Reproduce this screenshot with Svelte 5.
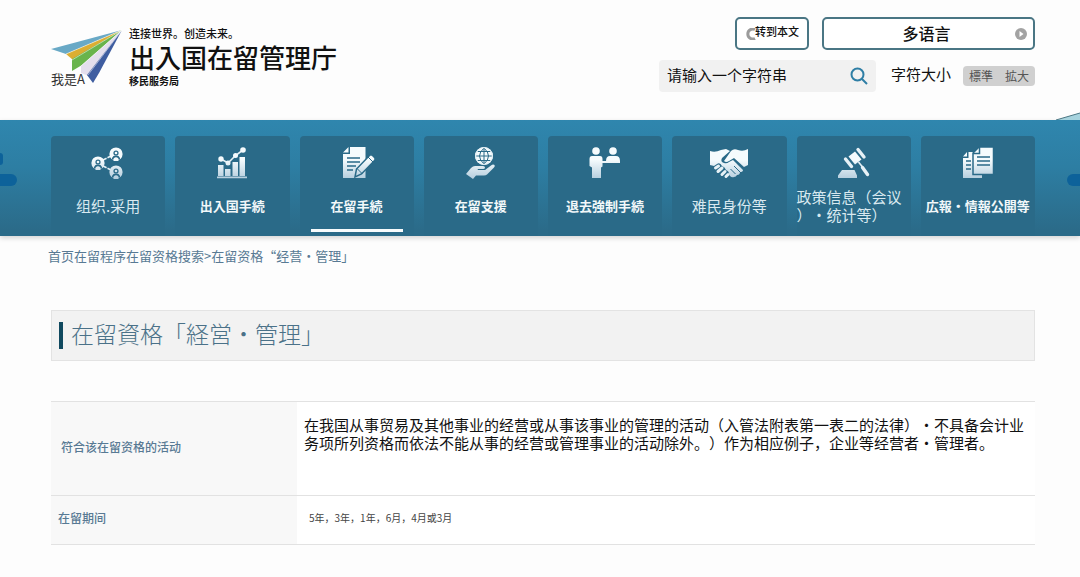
<script lang="ts">
    interface NavItem {
        icon: string;
        label: string;
        lang: "zh" | "ja";
        active?: boolean;
    }

    const navItems: NavItem[] = [
        { icon: "people", label: "组织.采用", lang: "zh" },
        { icon: "chart", label: "出入国手続", lang: "ja" },
        { icon: "form", label: "在留手続", lang: "ja", active: true },
        { icon: "globe", label: "在留支援", lang: "ja" },
        { icon: "counter", label: "退去強制手続", lang: "ja" },
        { icon: "handshake", label: "难民身份等", lang: "zh" },
        { icon: "gavel", label: "政策信息（会议）・统计等）", lang: "zh" },
        { icon: "papers", label: "広報・情報公開等", lang: "ja" },
    ];

    let query = $state("");
    let large = $state(false);
</script>

{#snippet person(x: number, y: number)}
    <circle cx={x} cy={y} r="6.6" />
    <circle class="cut" cx={x} cy={y - 1} r="2.6" />
    <path class="cut" d="M{x - 4} {y + 5.4}v-1.4q1-2.4 4-2.4t4 2.4v1.4z" />
    <circle cx={x} cy={y - 1} r="1.3" />
    <path d="M{x - 2.4} {y + 7}v-2.4q2.4-2.6 4.8 0v2.4z" />
{/snippet}

{#snippet icon(name: string)}
    <svg class="icon" viewBox="0 0 40 32" aria-hidden="true">
        {#if name === "people"}
            <path class="line" d="M15 13l8-4M15 19l8 4" stroke-dasharray="4 1" />
            {@render person(10, 16)}
            {@render person(28, 7)}
            {@render person(28, 25)}
        {:else if name === "chart"}
            <path d="M5 29.5h30v1.8H5zM6 18h5.5v11H6zM13 22h5.5v7H13zM20.5 15H26v14h-5.5zM27.5 10H33v19h-5.5z" />
            <path class="line" d="M9 12l7 4 7.5-7.5L31 3" />
            <circle cx="9" cy="12" r="2.7" />
            <circle cx="16" cy="16" r="2.5" />
            <circle cx="23.5" cy="8.5" r="2.5" />
            <circle cx="31" cy="3" r="2.8" />
        {:else if name === "form"}
            <path d="M13 0h15.500v31H6V7h7zM11.500 0v5.500H6z" />
            <path class="cut-line" d="M10 11h13M10 15h13M10 19h9M10 23h6" />
            <path class="edge" d="M18 30l1.500-8L32.500 8.500q1.500-1.500 3 0l2 2q1.500 1.500 0 3L24.500 27z" />
            <path class="cut-line thin" d="M20 21.500l5 5M31 10l5 5" />
        {:else if name === "globe"}
            <circle cx="23" cy="9" r="9" />
            <path class="cut-line thin" d="M23 0v18M14 9h18M16 4.500h14M16 13.500h14M23 1q-9 8 0 16M23 1q9 8 0 16" />
            <circle class="rim" cx="23" cy="9" r="8.400" />
            <path d="M5 27l5-6q2-2 4-2h8q2 0 2 1.500T22 22h-5l-.5 1h7.500l6-4.500q2-1.500 3.500-.5.8 1-.5 2.500l-7 7q-1 1-3 1h-8L12 32z" />
        {:else if name === "counter"}
            <circle cx="11" cy="4" r="3.800" />
            <path d="M7 9h8q2.500 0 2.500 3v2H35v2H17.500v3.500l-1.500 1V31H7V20.500L4.500 19v-7q0-3 2.500-3z" />
            <circle cx="28" cy="4" r="3.800" />
            <path d="M21 14q0-5 4-5h6q4 0 4 5z" />
        {:else if name === "handshake"}
            <path d="M1 4q5 2 11-1l5-1 4 2-8 7q-2 4 2 5 3 1 5-1l4-2 10 10q0 2-3 2 0 3-3 3-1 2-3 2-2 1-4-1l-1-2q0-3-3-4-1-3-4-4-2-4-5-2l-3 2-4-1z" />
            <path d="M22 4q3-3 7-1 5 2 10-1v16l-4 2-10-9-5 3q-3 2-5 0z" />
            <path class="cut-line thin" d="M25 19l6 6M21.500 22l5 5" />
            <path class="hand" d="M6.500 21l3 -2M9 24.500l4-3.500M13 27.500l3-3M17 29.500l2-2" />
        {:else if name === "gavel"}
            <path d="M8 23h12.500l2.500 5.500V31H4v-2.500zM14.500 9.500l6.500-5 6.500 8-6.500 5z" />
            <path class="cap" d="M11.500 12l6 7.500M24 2.500l6 7.500" />
            <path class="line" d="M24.500 15l4 5" />
            <path class="cap" d="M28.500 20.500l5 7" />
        {:else}
            <path d="M10.500 5H24v26H5V11h5.500zM9 5v4.500H5z" />
            <path class="cut-line" d="M8 14h5M8 18h5M8 22h5" />
            <path class="edge" d="M21 0h14.500v27.500H15V6z" />
            <path class="cut-line" d="M21.500 0v6.500H15M19 10h13M19 14h13M19 18h13" />
        {/if}
    </svg>
{/snippet}

<svg class="defs" aria-hidden="true">
    <defs>
        <linearGradient id="icon-fill" gradientUnits="userSpaceOnUse" x1="0" y1="0" x2="0" y2="32">
            <stop offset="0.4" stop-color="#f5fbfd" />
            <stop offset="1" stop-color="#b4cddd" />
        </linearGradient>
    </defs>
</svg>

<div class="page">
    <header>
        <div class="brand">
            <div class="logo">
                <svg viewBox="0 0 72 58" aria-hidden="true">
                    <path fill="#69a9c6" d="M71 1L0 20l15 5z" />
                    <path fill="#dcae32" d="M71 1L15 25l7 6z" />
                    <path fill="#69b44c" d="M71 1L21 30v12l10-6z" />
                    <path fill="#e4dfed" d="M71 1L30 37v7l8 3z" />
                    <path fill="#3f5da0" d="M71 1L36 46l6 8 6-10z" />
                    <path class="fold" d="M71 1L15 25M71 1L21 31M71 1L30 37M71 1L37 46" />
                </svg>
                <span>我是A</span>
            </div>
            <div class="names">
                <p class="slogan">连接世界。创造未来。</p>
                <p class="agency">出入国在留管理庁</p>
                <p class="bureau">移民服务局</p>
            </div>
        </div>

        <div class="tools">
            <div class="row">
                <button class="outlined skip" type="button">
                    <svg class="dot" viewBox="0 0 12 12" aria-hidden="true">
                        <path d="M9 1.500a5 5 0 1 0 0 9" fill="none" stroke="#9b9b9b" stroke-width="3" />
                    </svg>
                    <span>转到本文</span>
                </button>
                <button class="outlined language" type="button">
                    <span>多语言</span>
                    <svg class="dot" viewBox="0 0 12 12" aria-hidden="true">
                        <circle cx="6" cy="6" r="6" fill="#a3a3a3" />
                        <path d="M4.500 3l4 3-4 3z" fill="#fff" />
                    </svg>
                </button>
            </div>
            <div class="row">
                <form class="search" onsubmit={(e) => e.preventDefault()}>
                    <input type="text" aria-label="请输入一个字符串" placeholder="请输入一个字符串" bind:value={query} />
                    <button type="submit" aria-label="搜索">
                        <svg viewBox="0 0 18 18" aria-hidden="true">
                            <circle cx="7.500" cy="7.500" r="6" />
                            <path d="M12 12l5 5" />
                        </svg>
                    </button>
                </form>
                <span class="size-label" id="size-label">字符大小</span>
                <div class="sizes" role="group" aria-labelledby="size-label" lang="ja">
                    <button type="button" aria-pressed={!large} onclick={() => (large = false)}>標準</button>
                    <button type="button" aria-pressed={large} onclick={() => (large = true)}>拡大</button>
                </div>
            </div>
        </div>
    </header>

    <nav class="main-nav">
        <svg class="wave" viewBox="0 0 24 8" aria-hidden="true">
            <path fill="#a6d3de" d="M0 8L24 1v7z" />
            <path fill="none" stroke="#4c7784" d="M0 8L24 1" />
        </svg>
        <span class="cloud small"></span>
        <span class="cloud left"></span>
        <span class="cloud right"></span>
        <ul>
            {#each navItems as item}
                <li>
                    <a href="#top" class={item.lang} class:active={item.active} lang={item.lang}>
                        {@render icon(item.icon)}
                        <span class="label">{item.label}</span>
                    </a>
                </li>
            {/each}
        </ul>
    </nav>

    <nav class="breadcrumb" aria-label="breadcrumb">
        <a href="#top">首页</a><a href="#top">在留程序</a><a href="#top">在留资格搜索</a>&gt;<span>在留资格“经营・管理」</span>
    </nav>

    <main>
        <h1 lang="ja"><span>在留資格「経営・管理」</span></h1>

        <table>
            <tbody>
                <tr class="activity">
                    <th scope="row">符合该在留资格的活动</th>
                    <td>在我国从事贸易及其他事业的经营或从事该事业的管理的活动（入管法附表第一表二的法律）・不具备会计业务项所列资格而依法不能从事的经营或管理事业的活动除外。）作为相应例子，企业等经营者・管理者。</td>
                </tr>
                <tr class="period">
                    <th scope="row">在留期间</th>
                    <td>5年，3年，1年，6月，4月或3月</td>
                </tr>
            </tbody>
        </table>
    </main>
</div>

<style>
    :global(body) {
        background: #fdfdfd;
    }

    .page {
        font-family: "Noto Sans CJK SC", "Noto Sans CJK JP", sans-serif;
        color: #111111;
        text-spacing-trim: space-all;
        overflow-x: hidden;
        padding-bottom: 32px;
    }

    [lang="ja"] {
        font-family: "Noto Sans CJK JP", sans-serif;
    }

    button,
    input {
        font: inherit;
        color: inherit;
        margin: 0;
        padding: 0;
        border: 0;
        background: none;
    }

    button {
        cursor: pointer;
    }

    a {
        color: inherit;
        text-decoration: none;
    }

    p {
        margin: 0;
    }

    .defs {
        position: absolute;
        width: 0;
        height: 0;
    }

    header {
        display: flex;
        justify-content: space-between;
        box-sizing: border-box;
        min-height: 120px;
        padding: 17px 45px 16px 51px;
    }

    .brand {
        display: flex;
        gap: 6px;
        padding-top: 8px;
    }

    .logo {
        position: relative;
        width: 72px;
        padding-top: 4px;
    }

    .logo svg {
        display: block;
        width: 72px;
        height: 58px;
    }

    .logo span {
        position: absolute;
        left: 0;
        bottom: 17px;
        font-size: 13px;
        line-height: 16px;
        color: #333333;
    }

    .fold {
        fill: none;
        stroke: #ffffff;
        stroke-width: 0.5;
    }

    .slogan {
        font-size: 11px;
        line-height: 16px;
        font-weight: 500;
    }

    .agency {
        font-family: "Noto Sans CJK JP", sans-serif;
        font-size: 26px;
        line-height: 32px;
        font-weight: 500;
    }

    .bureau {
        font-size: 10px;
        line-height: 16px;
        font-weight: 700;
    }

    .tools {
        display: flex;
        flex-direction: column;
        gap: 10px;
        width: 376px;
    }

    .row {
        display: flex;
        align-items: center;
    }

    .outlined {
        display: flex;
        align-items: center;
        box-sizing: border-box;
        height: 33px;
        border: 2px solid #4a7684;
        border-radius: 5px;
        background: #ffffff;
    }

    .dot {
        width: 12px;
        height: 12px;
        flex: none;
    }

    .skip {
        width: 74px;
        margin-left: auto;
        padding-left: 9px;
        font-size: 11px;
        line-height: 16px;
        font-weight: 500;
    }

    .skip span {
        margin: 0 -8px 6px -3px;
        white-space: nowrap;
    }

    .language {
        width: 213px;
        margin-left: 13px;
        padding: 0 6px 0 14px;
        font-size: 16px;
        font-weight: 500;
    }

    .language span {
        flex: 1;
        padding-bottom: 2px;
    }

    .search {
        display: flex;
        align-items: center;
        flex: 1;
        height: 32px;
        padding: 0 8px;
        border-radius: 4px;
        background: #f1f1f1;
    }

    .search input {
        flex: 1;
        box-sizing: border-box;
        min-width: 0;
        height: 32px;
        padding-bottom: 4px;
        font-size: 15px;
        outline: none;
    }

    .search input::placeholder {
        color: #111111;
        opacity: 1;
    }

    .search svg {
        display: block;
        width: 18px;
        height: 18px;
        fill: none;
        stroke: #2e7ea5;
        stroke-width: 2;
    }

    .size-label {
        margin: 0 12px 0 15px;
        padding-bottom: 4px;
        font-size: 15px;
        line-height: 20px;
    }

    .sizes {
        display: flex;
        justify-content: space-around;
        width: 72px;
        border-radius: 4px;
        background: #d0d0d0;
    }

    .sizes button {
        font-size: 12px;
        line-height: 20px;
        color: #555555;
    }

    .main-nav {
        position: relative;
        padding: 16px 45px 0 51px;
        background: linear-gradient(#2f86ae, #2d7ea3 40%, #2b6b89 95%);
        box-shadow: 0 2px 5px #0000002b;
    }

    .main-nav ul {
        display: grid;
        grid-template-columns: repeat(8, 1fr);
        gap: 10px;
        margin: 0;
        padding: 0;
        list-style: none;
    }

    .main-nav a {
        position: relative;
        display: flex;
        flex-direction: column;
        align-items: center;
        box-sizing: border-box;
        height: 100px;
        padding-top: 11px;
        border-radius: 4px 4px 0 0;
        background: #2a6a88;
        color: #d9e9f0;
    }

    .wave {
        position: absolute;
        right: 0;
        bottom: 100%;
        width: 24px;
        height: 8px;
    }

    .cloud {
        position: absolute;
        height: 12px;
        background: #0d629a;
    }

    .cloud.small {
        left: 0;
        top: 33px;
        width: 3px;
        border-radius: 0 6px 6px 0;
    }

    .cloud.left {
        left: 0;
        top: 54px;
        width: 17px;
        border-radius: 0 6px 6px 0;
    }

    .cloud.right {
        right: 0;
        top: 54px;
        width: 13px;
        border-radius: 6px 0 0 6px;
    }

    .label {
        display: flex;
        align-items: center;
        min-height: 36px;
        margin-top: 9px;
        font-size: 15px;
        line-height: 18px;
        line-break: anywhere;
    }

    .ja .label {
        font-size: 13px;
        font-weight: 700;
        color: #f2f8fa;
    }

    .active::after {
        content: "";
        position: absolute;
        left: 11px;
        right: 11px;
        bottom: 4px;
        height: 3px;
        background: #f7fbfc;
    }

    .icon {
        width: 40px;
        height: 32px;
        flex: none;
        fill: url(#icon-fill);
        overflow: visible;
    }

    .line,
    .cap,
    .hand {
        fill: none;
        stroke: #e6f1f6;
        stroke-width: 1.6;
    }

    .cap {
        stroke-width: 3.4;
        stroke-linecap: round;
    }

    .hand {
        stroke-width: 3;
        stroke-linecap: round;
    }

    .cut {
        fill: #2a6a88;
    }

    .cut-line {
        fill: none;
        stroke: #2a6a88;
        stroke-width: 1.5;
    }

    .cut-line.thin {
        stroke-width: 1;
    }

    .edge {
        stroke: #2a6a88;
        stroke-width: 1.5;
    }

    .rim {
        fill: none;
        stroke: #e6f1f6;
        stroke-width: 1.2;
    }

    .breadcrumb {
        padding: 11px 48px 0;
        font-size: 13px;
        line-height: 18px;
        color: #587a94;
    }

    main {
        padding: 45px 45px 0 51px;
    }

    h1 {
        display: flex;
        align-items: center;
        gap: 8px;
        box-sizing: border-box;
        min-height: 51px;
        margin: 0 0 40px;
        padding: 0 7px;
        border: 1px solid #e3e3e3;
        background: #f2f2f2;
        font-size: 23px;
        line-height: 32px;
        font-weight: 300;
        color: #4a7188;
    }

    h1 span {
        padding-bottom: 6px;
    }

    h1::before {
        content: "";
        width: 4px;
        height: 27px;
        background: #10495f;
    }

    table {
        width: 100%;
        border-collapse: collapse;
        table-layout: fixed;
    }

    tr {
        border-top: 1px solid #e2e2e2;
        border-bottom: 1px solid #e2e2e2;
    }

    th {
        width: 25%;
        box-sizing: border-box;
        padding: 0 8px 4px;
        background: #f8f8f8;
        font-size: 12px;
        line-height: 18px;
        font-weight: 500;
        text-align: left;
        color: #587a94;
    }

    td {
        padding: 0 8px;
        background: #ffffff;
    }

    .activity th {
        padding-left: 10px;
    }

    .activity td {
        height: 79px;
        padding: 14px 0 0 7px;
        font-size: 15px;
        line-height: 18px;
        vertical-align: top;
    }

    .period th {
        padding-left: 7px;
    }

    .period td {
        height: 44px;
        padding: 0 12px 4px;
        font-size: 10px;
        line-height: 16px;
        color: #444444;
    }
</style>
